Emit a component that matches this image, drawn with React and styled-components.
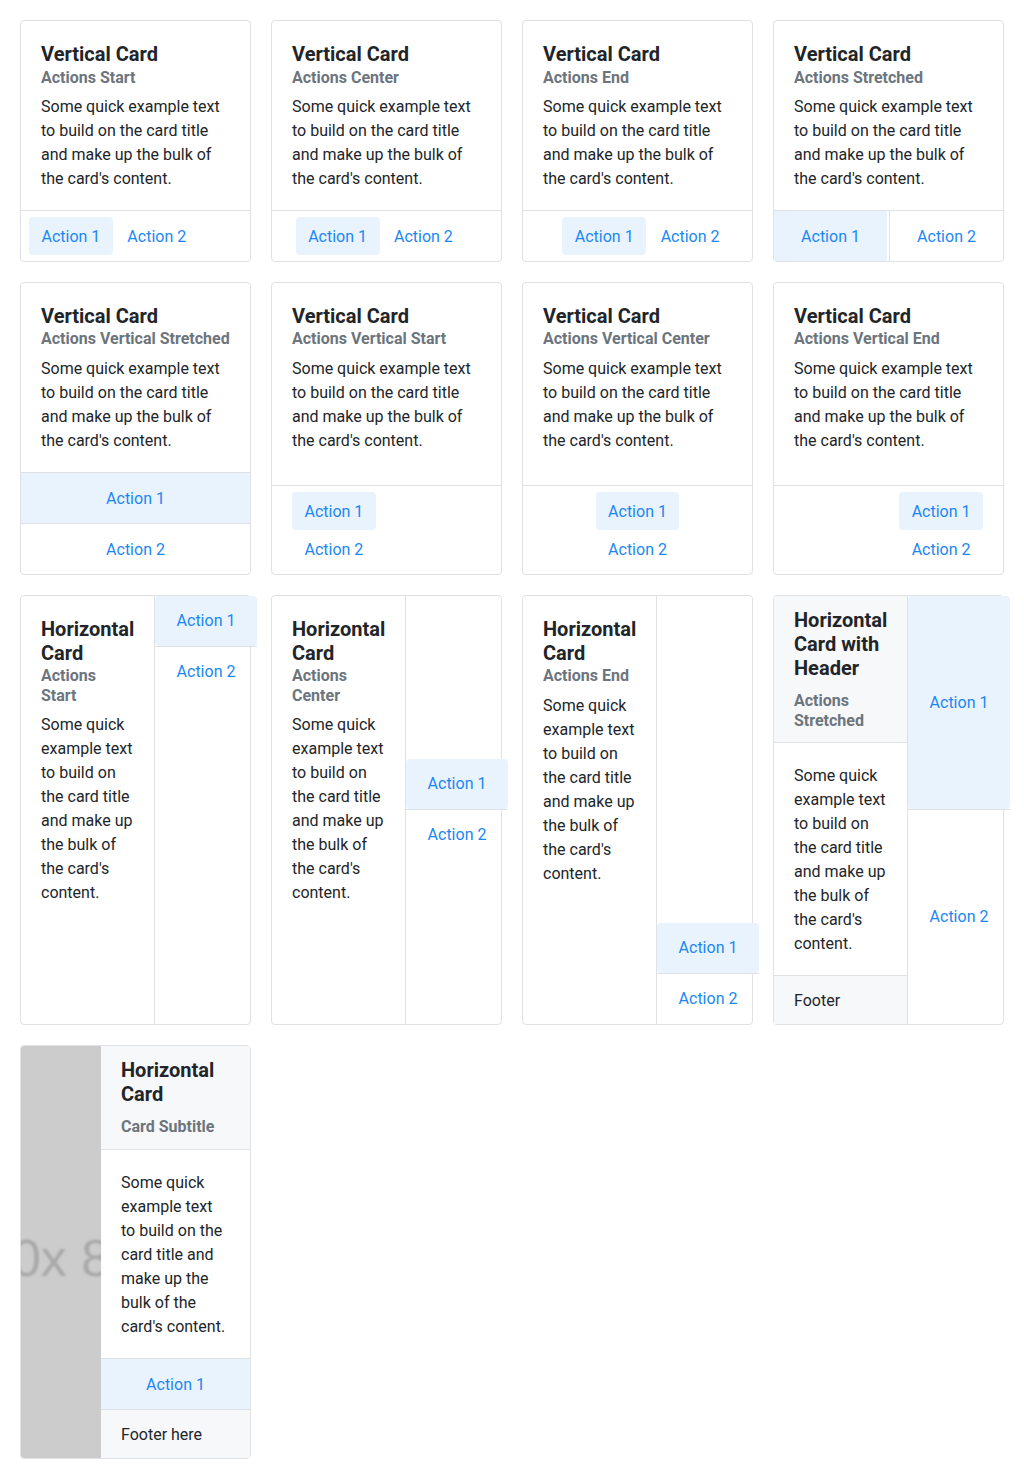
import React from "react"
import styled, { createGlobalStyle, css } from "styled-components"

const GlobalStyle = createGlobalStyle`
  body {
    margin: 0;
    background: #fff;
    font-family: Roboto, "Liberation Sans", sans-serif;
    color: #212529;
  }
  * { box-sizing: border-box; }
`

const BLUE = "#1c87f3"
const LIGHT = "#e9f3fe"
const LINE = "#dfe1e5"
const SHADE = "#f7f8fa"

const Page = styled.div`
  display: grid;
  grid-template-columns: repeat(4, 231px);
  gap: 20px;
  padding: 20px;
`

const Card = styled.div`
  display: flex;
  flex-direction: ${p => (p.$horizontal ? "row" : "column")};
  border: 1px solid ${LINE};
  border-radius: 4px;
  background: #fff;
`

const Body = styled.div`
  flex: 1 1 auto;
  padding: 21px 20px 19px;
`

const Column = styled.div`
  display: flex;
  flex-direction: column;
  flex: ${p => (p.$fixed ? "0 0 134px" : "1 1 auto")};
  width: ${p => (p.$fixed ? "134px" : "auto")};
  border-right: ${p => (p.$fixed ? `1px solid ${LINE}` : "none")};
  min-width: 0;
`

const Header = styled.div`
  background: ${SHADE};
  padding: 12px 20px;
  border-bottom: 1px solid ${LINE};
  border-top-left-radius: ${p => (p.$round ? "3px" : "0")};
`

const Footer = styled.div`
  background: ${SHADE};
  padding: 13px 20px 11px;
  border-top: 1px solid ${LINE};
  font-size: 16px;
  line-height: 24px;
`

const Title = styled.div`
  font-size: 20px;
  font-weight: 700;
  line-height: 24px;
`

const Subtitle = styled.div`
  font-size: 16px;
  font-weight: 700;
  line-height: 1.2;
  color: #6c757d;
  margin-top: ${p => (p.$header ? "11.5px" : "1.5px")};
`

const Text = styled.div`
  font-size: 16px;
  line-height: 24px;
  margin-top: ${p => (p.$first ? "0" : "8.3px")};
`

const justify = { start: "flex-start", center: "center", end: "flex-end", stretch: "stretch" }

const Actions = styled.div`
  display: flex;
  border-top: 1px solid ${LINE};
  ${p =>
    p.$vertical
      ? css`
          flex-direction: column;
          align-items: ${justify[p.$align]};
          padding: ${p.$align === "stretch" ? "0" : "6px 20px"};
        `
      : css`
          flex-direction: row;
          justify-content: ${justify[p.$align]};
          gap: 2px;
          height: 51px;
          padding: ${p.$align === "stretch" ? "0" : "6px 20px 6px 8px"};
        `}
`

const SideActions = styled.div`
  display: flex;
  flex-direction: column;
  justify-content: ${p => justify[p.$align]};
  flex: 0 0 102px;
  width: 102px;
`

const Action = styled.div`
  display: flex;
  align-items: center;
  justify-content: center;
  font-size: 16px;
  line-height: 22px;
  color: ${BLUE};
  background: ${p => (p.$active ? LIGHT : "transparent")};
  border-radius: ${p => (p.$square ? "0" : "4px")};
  padding: ${p => (p.$side ? "0 12.5px" : "2px 12.5px 0")};
  height: ${p => (p.$tall ? (p.$divTop ? "51px" : "50px") : "38px")};
  flex: ${p => (p.$grow ? "1 1 0" : "0 0 auto")};
  border-left: ${p => (p.$divLeft ? `1px solid ${LINE}` : "none")};
  border-top: ${p => (p.$divTop ? `1px solid ${LINE}` : "none")};
  cursor: pointer;
`

const Placeholder = styled.div`
  flex: 0 0 80px;
  width: 80px;
  background: #cccccc;
  border-radius: 3px 0 0 3px;
  overflow: hidden;
  svg { display: block; }
`

const TEXT = "Some quick example text to build on the card title and make up the bulk of the card's content."

function Content({ title, subtitle }) {
  return (
    <>
      <Title>{title}</Title>
      <Subtitle>{subtitle}</Subtitle>
      <Text>{TEXT}</Text>
    </>
  )
}

function RowCard({ subtitle, align }) {
  const stretched = align === "stretch"
  return (
    <Card>
      <Body>
        <Content title="Vertical Card" subtitle={subtitle} />
      </Body>
      <Actions $align={align}>
        <Action $active $grow={stretched} $tall={stretched} $square={stretched}>Action 1</Action>
        <Action $grow={stretched} $tall={stretched} $square={stretched} $divLeft={stretched}>Action 2</Action>
      </Actions>
    </Card>
  )
}

function ColumnCard({ subtitle, align }) {
  const stretched = align === "stretch"
  return (
    <Card>
      <Body>
        <Content title="Vertical Card" subtitle={subtitle} />
      </Body>
      <Actions $vertical $align={align}>
        <Action $active $tall={stretched} $square={stretched}>Action 1</Action>
        <Action $tall={stretched} $square={stretched} $divTop={stretched}>Action 2</Action>
      </Actions>
    </Card>
  )
}

function SideCard({ subtitle, align }) {
  return (
    <Card $horizontal>
      <Column $fixed>
        <Body>
          <Content title="Horizontal Card" subtitle={subtitle} />
        </Body>
      </Column>
      <SideActions $align={align}>
        <Action $side $active $tall>Action 1</Action>
        <Action $side $tall $square $divTop>Action 2</Action>
      </SideActions>
    </Card>
  )
}

export default function App() {
  return (
    <>
      <GlobalStyle />
      <Page>
        <RowCard subtitle="Actions Start" align="start" />
        <RowCard subtitle="Actions Center" align="center" />
        <RowCard subtitle="Actions End" align="end" />
        <RowCard subtitle="Actions Stretched" align="stretch" />

        <ColumnCard subtitle="Actions Vertical Stretched" align="stretch" />
        <ColumnCard subtitle="Actions Vertical Start" align="start" />
        <ColumnCard subtitle="Actions Vertical Center" align="center" />
        <ColumnCard subtitle="Actions Vertical End" align="end" />

        <SideCard subtitle="Actions Start" align="start" />
        <SideCard subtitle="Actions Center" align="center" />
        <SideCard subtitle="Actions End" align="end" />

        <Card $horizontal>
          <Column $fixed>
            <Header $round>
              <Title>Horizontal Card with Header</Title>
              <Subtitle $header>Actions Stretched</Subtitle>
            </Header>
            <Body>
              <Text $first>{TEXT}</Text>
            </Body>
            <Footer>Footer</Footer>
          </Column>
          <SideActions $align="stretch">
            <Action $side $active $grow>Action 1</Action>
            <Action $side $grow $square $divTop>Action 2</Action>
          </SideActions>
        </Card>

        <Card $horizontal>
          <Placeholder>
            <svg width="80" height="100%">
              <defs>
                <filter id="soft">
                  <feGaussianBlur stdDeviation="1" />
                </filter>
              </defs>
              <text
                x="-38"
                y="230"
                fontFamily="Liberation Sans, sans-serif"
                fontSize="52"
                fill="#a9a9a9"
                filter="url(#soft)"
              >
                80x 80
              </text>
            </svg>
          </Placeholder>
          <Column>
            <Header>
              <Title>Horizontal Card</Title>
              <Subtitle $header>Card Subtitle</Subtitle>
            </Header>
            <Body>
              <Text $first>{TEXT}</Text>
            </Body>
            <Actions $align="stretch">
              <Action $active $grow $tall $square>Action 1</Action>
            </Actions>
            <Footer>Footer here</Footer>
          </Column>
        </Card>
      </Page>
    </>
  )
}
